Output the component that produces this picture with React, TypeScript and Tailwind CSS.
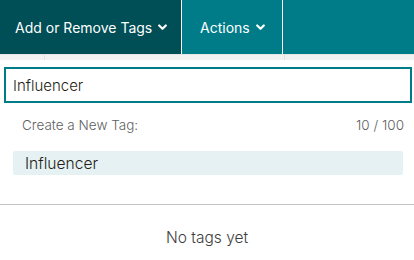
import { useState } from "react"

function Chevron() {
    return (
        <svg width="9" height="7" viewBox="0 0 9 7" className="ml-[6px] mt-[1px]">
            <path d="M1.2 1.5 L4.5 4.8 L7.8 1.5" fill="none" stroke="white" strokeWidth="2.2" strokeLinecap="round" strokeLinejoin="round" />
        </svg>
    )
}

export default function App() {
    const [tag, setTag] = useState("Influencer")

    return (
        <div className="w-[414px] h-[260px] bg-white overflow-hidden" style={{ fontFamily: "Inter, 'Noto Sans', sans-serif" }}>
            <div className="flex h-[54px] bg-[#007c89] text-white text-[14px]">
                <button className="flex items-center h-full w-[181px] bg-[#004e56] pl-[15px]">
                    Add or Remove Tags
                    <Chevron />
                </button>
                <div className="w-px bg-white" />
                <button className="flex items-center h-full w-[100px] pl-[18px]">
                    Actions
                    <Chevron />
                </button>
                <div className="w-px bg-white" />
            </div>

            <div className="flex h-[6px] bg-[#f2f2f2] border-t border-[#e6e6e6]">
                <div className="w-[45px] border-r border-[#e2e2e2]" />
                <div className="w-[240px] border-r border-[#e2e2e2]" />
            </div>

            <div className="px-[4px] pt-[7px]">
                <input
                    value={tag}
                    onChange={(e) => setTag(e.target.value)}
                    spellCheck
                    className="w-[408px] h-[36px] border-2 border-[#007c89] outline-none px-[7px] text-[15px] font-light text-[#241c15]"
                />
            </div>

            <div className="flex justify-between items-center pl-[22px] pr-[10px] mt-[12px] text-[13.5px] font-light text-[#5f5f5f]">
                <span>Create a New Tag:</span>
                <span>{tag.length} / 100</span>
            </div>

            <div className="mx-[13px] w-[390px] mt-[16px] h-[24px] bg-[#e5f1f3] rounded-[2px] flex items-center pl-[12px] text-[15.6px] font-light text-[#241c15]">
                {tag}
            </div>

            <div className="mt-[29px] border-t border-[#c4c4c4]" />

            <div className="text-center pt-[21px] text-[15.5px] font-light text-[#3e3e3e]">No tags yet</div>
        </div>
    )
}
